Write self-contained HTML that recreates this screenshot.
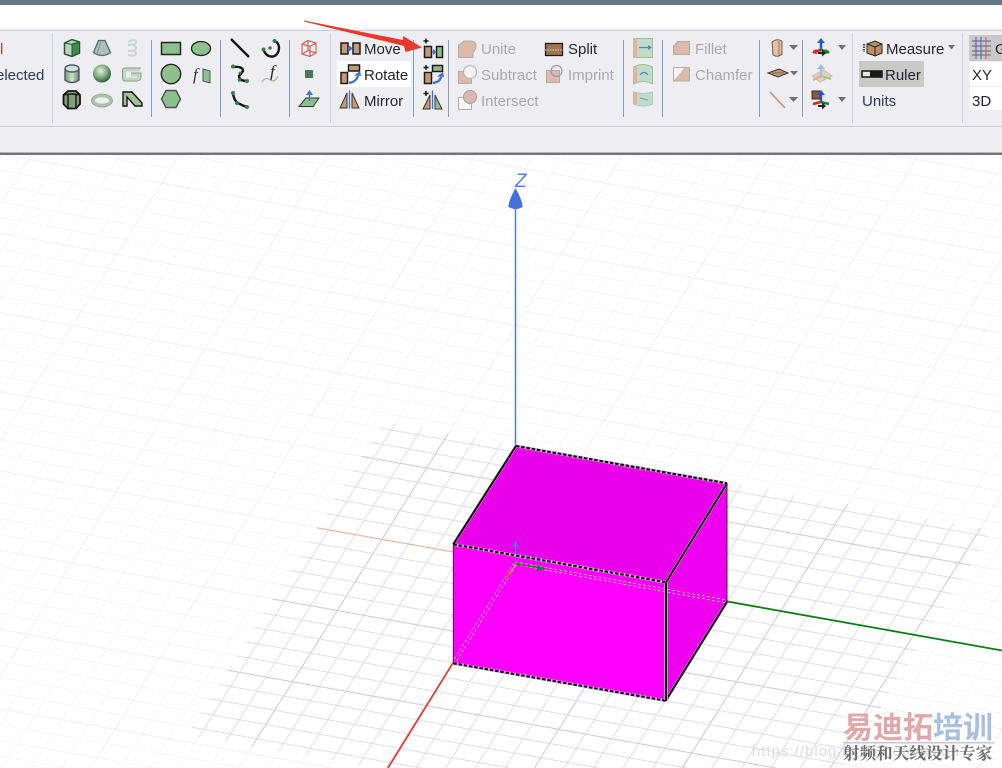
<!DOCTYPE html>
<html>
<head>
<meta charset="utf-8">
<style>
html,body{margin:0;padding:0;background:#fff;width:1002px;height:768px;overflow:hidden}
svg{position:absolute;left:0;top:0;display:block}
text{font-family:"Liberation Sans",sans-serif;font-size:15px}
.d{fill:#24242e}
.g{fill:#a9a9ad}
.s{stroke:#8d9ab5;stroke-width:1;fill:none}
.s2{stroke:#cfd2e2;stroke-width:1;fill:none}
.br{fill:#c39a78;stroke:#1d1a18;stroke-width:1.5}
.gr{fill:#8dbf8d;stroke:#1d1a18;stroke-width:1.5}
.pk{fill:#dfb8ac;stroke:#a9b0a4;stroke-width:1}
</style>
</head>
<body>
<svg width="1002" height="768" viewBox="0 0 1002 768" xmlns="http://www.w3.org/2000/svg">
<defs>
<path id="ga" d="M981 155L1002 158.800M892 155L1002 174.600M803.300 155L1002 190.500M714.600 155L1002 206.300M625.900 155L1002 222.200M537.100 155L1002 238M448.400 155L1002 253.900M359.700 155L1002 269.700M271 155L1002 285.500M182.300 155L1002 301.400M93.600 155L1002 317.200M4.800 155L1002 333.100M0 170L1002 348.900M0 185.800L1002 364.800M0 201.700L1002 380.600M0 217.500L1002 396.400M0 233.400L1002 412.300M0 249.200L1002 428.100M0 265L1002 444M0 280.900L1002 459.800M0 296.700L1002 475.700M0 312.600L1002 491.500M0 328.400L1002 507.300M0 344.300L1002 523.200M0 360.100L1002 539M0 376L1002 554.900M0 391.800L1002 570.700M0 407.700L1002 586.600M0 423.500L1002 602.400M0 439.300L1002 618.300M0 455.200L1002 634.100M0 471L1002 650M0 486.900L1002 665.800M0 502.700L1002 681.600M0 518.600L1002 697.500M0 534.400L1002 713.300M0 550.300L1002 729.200M0 566.100L1002 745M0 581.900L1002 760.900M0 597.800L953 768M0 613.600L864.300 768M0 629.500L775.500 768M0 645.300L686.800 768M0 661.200L598.100 768M0 677L509.400 768M0 692.900L420.700 768M0 708.700L332 768M0 724.600L243.300 768M0 740.400L154.500 768M0 756.200L65.800 768"/>
<path id="gb" d="M31.300 155L0 204.900M60.900 155L0 252.200M90.400 155L0 299.300M120 155L0 346.500M149.600 155L0 393.700M179.200 155L0 440.900M208.700 155L0 488.100M238.300 155L0 535.300M267.900 155L0 582.500M297.500 155L0 629.700M327 155L0 676.800M356.600 155L0 724M386.200 155L2 768M415.800 155L31.600 768M445.400 155L61.200 768M474.900 155L90.700 768M504.500 155L120.300 768M534.100 155L149.900 768M563.700 155L179.500 768M593.200 155L209 768M622.800 155L238.600 768M652.400 155L268.200 768M682 155L297.800 768M711.500 155L327.300 768M741.100 155L356.900 768M770.700 155L386.500 768M800.300 155L416.100 768M829.900 155L445.700 768M859.400 155L475.200 768M889 155L504.800 768M918.600 155L534.400 768M948.200 155L564 768M977.700 155L593.500 768M1002 163.500L623.100 768M1002 210.700L652.700 768M1002 257.900L682.300 768M1002 305.100L711.800 768M1002 352.300L741.400 768M1002 399.500L771 768M1002 446.700L800.600 768M1002 493.800L830.200 768M1002 541L859.700 768M1002 588.200L889.300 768M1002 635.400L918.900 768M1002 682.600L948.500 768M1002 729.800L978 768"/>
<path id="gm" d="M892 155L1002 174.600M448.400 155L1002 253.900M4.800 155L1002 333.100M0 233.400L1002 412.300M0 312.600L1002 491.500M0 391.800L1002 570.700M0 471L1002 650M0 550.300L1002 729.200M0 629.500L775.500 768M0 708.700L332 768M31.300 155L0 204.900M179.200 155L0 440.900M327 155L0 676.800M474.900 155L90.700 768M622.800 155L238.600 768M770.700 155L386.500 768M918.600 155L534.400 768M1002 257.900L682.300 768M1002 493.800L830.200 768M1002 729.800L978 768"/>
<clipPath id="inner"><polygon points="383.500,421.700 992.100,530.300 843.100,768 376,768 187.600,734.300"/></clipPath>
<radialGradient id="sph" cx="0.42" cy="0.36" r="0.65"><stop offset="0" stop-color="#e6f0e6"/><stop offset="0.55" stop-color="#80ad80"/><stop offset="1" stop-color="#2f5a3a"/></radialGradient>
<linearGradient id="cyl" x1="0" x2="1" y1="0" y2="0"><stop offset="0" stop-color="#6f9a6f"/><stop offset="0.5" stop-color="#d0e2d0"/><stop offset="1" stop-color="#5f8f5f"/></linearGradient>
</defs>

<!-- viewport grid -->
<g fill="none" stroke-width="1">
  <g stroke="#f6f6fb"><use href="#ga"/><use href="#gb"/></g>
  <use href="#gm" stroke="#f1f0f7"/>
  <g clip-path="url(#inner)">
    <g stroke="#e0deef"><use href="#ga"/><use href="#gb"/></g>
    <use href="#gm" stroke="#cfcde3"/>
  </g>
</g>

<!-- top chrome -->
<rect x="0" y="0" width="1002" height="5" fill="#66768c"/>
<rect x="0" y="5" width="1002" height="23" fill="#ffffff"/>
<rect x="0" y="28" width="1002" height="2" fill="#f5f5f5"/>
<rect x="0" y="30" width="1002" height="1" fill="#cdcde0"/>
<rect x="0" y="31" width="1002" height="95" fill="#eeeef2"/>
<rect x="0" y="126" width="1002" height="1" fill="#cdcde0"/>
<rect x="0" y="127" width="1002" height="25" fill="#f0f0f2"/>
<rect x="0" y="152" width="1002" height="1" fill="#b5b5b5"/>
<rect x="0" y="153" width="1002" height="2" fill="#757575"/>

<!-- separators -->
<g>
<path class="s2" d="M52.500 33V123M330.500 33V123M852.500 33V123M962.500 33V123"/>
<path class="s" d="M151.500 40V117M220.500 40V117M289.500 40V117M413.500 40V117M448.500 40V117M623.500 40V117M662.500 40V117M759.500 40V117M802.500 40V117"/>
</g>

<!-- highlights -->
<rect x="337" y="61" width="74" height="26" fill="#ffffff"/>
<rect x="859" y="61" width="65" height="26" fill="#c9c9c5"/>
<rect x="969" y="35" width="33" height="26" fill="#c9c9c9"/>
<rect x="970" y="62" width="32" height="24" fill="#ffffff"/>
<rect x="970" y="87" width="32" height="23" fill="#ffffff"/>

<!-- left clipped labels -->
<text x="0" y="54" style="fill:#a8442a">l</text>
<text x="-4" y="80" style="fill:#2b3a55">elected</text>

<!-- primitives -->
<g>
<polygon points="64.500,43 72,39.500 79.500,42 79.500,53 72,56.500 64.500,54" fill="#bcd4bd" stroke="#1f5a2c" stroke-width="1.500"/>
<polygon points="72,44 79.500,42 79.500,53 72,56.500" fill="#3f8a4f" stroke="#1f5a2c"/>
<path d="M64.500 43L72 44.500V56" stroke="#1f5a2c" fill="none"/>

<path d="M98.500 40.500H105L110.500 52.500Q102 58.500 93.500 52.500Z" fill="#a9c2b2" stroke="#56647e" stroke-width="1.300"/>
<path d="M101 41L97 54" stroke="#7d9aa0" fill="none"/>

<path d="M128 42Q136 38 136 42Q136 45 128 45Q136 44 136 48Q136 51 128 51Q136 50 136 53Q136 57 128 55" stroke="#c6dbce" stroke-width="2" fill="none"/>

<path d="M65 69V80Q72 85 79 80V69" fill="url(#cyl)" stroke="#4a5870" stroke-width="1.400"/>
<ellipse cx="72" cy="68.500" rx="7" ry="3.500" fill="#d4e4d4" stroke="#4a5870" stroke-width="1.400"/>

<circle cx="102" cy="73.500" r="9" fill="url(#sph)"/>

<path d="M141 68H125Q122.500 68 122.500 71V77Q122.500 81 125 81H136Q140 81 141 78V73H131" stroke="#8a9a8e" stroke-width="1" fill="none"/>
<path d="M140 70H126Q124.500 70 124.500 72V77Q124.500 79 126 79H135Q138 79 139 77V75H131" stroke="#bdd8bd" stroke-width="3" fill="none"/>

<polygon points="68,91 76,91 80,95 80,104 76,108.500 68,108.500 63.500,104 63.500,95" fill="#7f9f7f" stroke="#17140f" stroke-width="1.800"/>
<path d="M68 94V108M76 94V108M63.500 95Q72 93 80 95" stroke="#17140f" stroke-width="1.400" fill="none"/>

<ellipse cx="102" cy="100.500" rx="9" ry="5" fill="none" stroke="#a6c4a6" stroke-width="3.500"/>
<ellipse cx="102" cy="100.500" rx="10.500" ry="6.500" fill="none" stroke="#8a9a8e" stroke-width="0.600"/>

<path d="M123 92H132L142 103V106H135L127 97H127V106H123Z" fill="#9cc39c" stroke="#17140f" stroke-width="1.400"/>

<rect x="161.500" y="42.500" width="19" height="12" fill="#8dc08d" stroke="#20261f" stroke-width="1.500"/>
<ellipse cx="201" cy="48.500" rx="9.500" ry="7" fill="#8dc08d" stroke="#20261f" stroke-width="1.300"/>
<circle cx="171" cy="74" r="9.700" fill="#8dc08d" stroke="#20261f" stroke-width="1.400"/>
<polygon points="203,69 210,71 210,83 203,81" fill="#8dc08d" stroke="#4a5a4a"/>
<text x="193" y="80" style="font-family:'Liberation Serif',serif;font-style:italic;font-size:17px;fill:#333">f</text>
<polygon points="166,90.500 176,90.500 180.500,99 176,107.500 166,107.500 161.500,99" fill="#8dc08d" stroke="#4a4f55" stroke-width="1.400"/>

<path d="M231 39L249 57" stroke="#15151a" stroke-width="2.400" fill="none"/>
<path d="M263.500 49.500Q266 57 273 56.500Q279 55 279 47Q278.500 43 275 41" stroke="#15151a" stroke-width="2.400" fill="none"/>
<circle cx="263.500" cy="49.500" r="2" fill="#3a7d4a"/><circle cx="270" cy="48" r="1.700" fill="#3a7d4a"/><circle cx="274.500" cy="41" r="2" fill="#3a7d4a"/>

<path d="M233 67Q243 66 243 71Q241 74 239 76Q239 81 247 81" stroke="#15151a" stroke-width="2.400" fill="none"/>
<circle cx="233" cy="66.500" r="2" fill="#3a7d4a"/><circle cx="240" cy="73" r="1.500" fill="#3a7d4a"/><circle cx="239.500" cy="80" r="1.700" fill="#3a7d4a"/><circle cx="247" cy="81" r="2" fill="#3a7d4a"/>

<text x="270" y="77" style="font-family:'Liberation Serif',serif;font-style:italic;font-size:17px;fill:#222">f</text>
<path d="M262 82Q266 76 270 80Q275 83 278 76" stroke="#9cc09c" stroke-width="1.300" fill="none"/>

<path d="M233 93Q234 102 240 104Q243 106 248 107" stroke="#15151a" stroke-width="2.400" fill="none"/>
<circle cx="233" cy="93" r="2" fill="#3a7d4a"/><circle cx="237" cy="103" r="2" fill="#3a7d4a"/><circle cx="247" cy="107" r="2" fill="#3a7d4a"/>

<g fill="none" stroke="#d2625a" stroke-width="1.200">
<polygon points="302,44 308,40.500 316,43 316,53 310,56.500 302,54"/>
<path d="M302 44L310 46.500V56.500M310 46.500L316 43M308 40.500V50.500L302 54M308 50.500L316 53"/>
</g>
<rect x="305" y="70" width="8" height="8" fill="#4a7a55"/>
<polygon points="306,98 319,98 313,106.500 299,106.500" fill="#8dc08d" stroke="#2a3a2a"/>
<path d="M309.500 101V93" stroke="#3c72d8" stroke-width="1.500" fill="none"/>
<polygon points="309.500,90 306,95 313,95" fill="#3c72d8"/>
</g>

<!-- transform tools -->
<g>
<rect x="341" y="43" width="7" height="11" class="br"/>
<rect x="353" y="43" width="7" height="11" class="br"/>
<path d="M348 48.500H351" stroke="#3c72d8" stroke-width="1.500"/>
<polygon points="353,48.500 349,45.500 349,51.500" fill="#3c72d8"/>
<text x="364" y="54" class="d">Move</text>

<rect x="341" y="72.500" width="6.500" height="11" class="br"/>
<rect x="348.500" y="65" width="11" height="6" class="br"/>
<path d="M349 83Q356 82 358 76" stroke="#3c72d8" stroke-width="2.200" fill="none"/>
<polygon points="361,76 354,75.500 360,71" fill="#3c72d8"/>
<text x="364" y="80" class="d">Rotate</text>

<polygon points="347,93 347,108 340,108" fill="#c39a78" stroke="#3a3530"/>
<polygon points="352,93 352,108 359,108" fill="#c39a78" stroke="#3a3530"/>
<path d="M349.500 90.500V108.500" stroke="#3c72d8" stroke-width="1.300"/>
<text x="364" y="106" class="d">Mirror</text>

<path d="M426 38.500V43.500M423.500 41H428.500" stroke="#111" stroke-width="1.400"/>
<rect x="424.500" y="46.500" width="7" height="11" class="br"/>
<rect x="436.500" y="46.500" width="6" height="11" class="gr"/>
<path d="M432 52H435" stroke="#3c72d8" stroke-width="1.500"/>
<polygon points="436.500,52 433,49 433,55" fill="#3c72d8"/>

<path d="M426 65V70M423.500 67.500H428.500" stroke="#111" stroke-width="1.400"/>
<rect x="424.500" y="72.500" width="7" height="11" class="br"/>
<rect x="432.500" y="65.500" width="10" height="6" class="gr"/>
<path d="M433 83Q440 82 441 77" stroke="#3c72d8" stroke-width="2.200" fill="none"/>
<polygon points="444,77 437,76.500 443,72" fill="#3c72d8"/>

<path d="M426 91V96M423.500 93.500H428.500" stroke="#111" stroke-width="1.400"/>
<polygon points="430,95 430,109 423,109" fill="#c39a78" stroke="#3a3530"/>
<polygon points="435,95 435,109 442,109" fill="#8dc08d" stroke="#3a3530"/>
<path d="M432.500 90.500V109" stroke="#3c72d8" stroke-width="1.300"/>
</g>

<!-- boolean tools -->
<g>
<path d="M458.500 45.500L464 41H472Q476 42 476 46Q476 50 473 52V57.500H458.500Z" class="pk"/>
<text x="481" y="54" class="g">Unite</text>

<rect x="458.500" y="71.500" width="13" height="12" class="pk"/>
<circle cx="470" cy="72" r="6.500" fill="#f4f4f6" stroke="#b9b9bd" stroke-width="1.300"/>
<text x="481" y="80" class="g">Subtract</text>

<rect x="458.500" y="97.500" width="13" height="12" fill="#f6f6f6" stroke="#a9b0a4"/>
<circle cx="470" cy="97" r="6.500" fill="#dfb8ac" stroke="#a9a9b5" stroke-width="1.200"/>
<text x="481" y="106" class="g">Intersect</text>

<rect x="545.500" y="43.500" width="17" height="12" fill="#a0744f" stroke="#1d1a18" stroke-width="1.300"/>
<path d="M545 50H565" stroke="#d9d4c8" stroke-width="1" stroke-dasharray="1.500 1"/>
<text x="568" y="54" class="d">Split</text>

<rect x="546.500" y="70.500" width="13" height="12" class="pk"/>
<circle cx="556.500" cy="71" r="5.500" fill="none" stroke="#a096a8" stroke-width="1.200"/>
<text x="568" y="80" class="g">Imprint</text>

<rect x="633.500" y="38.500" width="19" height="19" fill="#c3dcc6" stroke="#9cc09c"/>
<rect x="633" y="38" width="4" height="20" fill="#e0b59c"/>
<path d="M639 47.500H650" stroke="#5585d8" stroke-width="1.300"/>
<polygon points="652,47.500 648,45 648,50" fill="#5585d8"/>

<path d="M633.500 67Q643 62 652.500 67V84Q643 79 633.500 84Z" fill="#c3dcc6" stroke="#9cc09c"/>
<path d="M633 67H637V83H633Z" fill="#e0b59c"/>
<path d="M640 75Q644 70 648 75" stroke="#5585d8" stroke-width="1.200" fill="none"/>

<path d="M633.500 92Q643 95 652.500 92V104Q643 108 633.500 104Z" fill="#c3dcc6" stroke="#a8c8d8"/>
<path d="M633 92H637V104H633Z" fill="#e0b59c"/>
<path d="M640 98L648 100" stroke="#80a0d8" stroke-width="1.200" fill="none"/>

<path d="M673.500 46L678 41.500H689.500V54.500H673.500Z" class="pk"/>
<text x="695" y="54" class="g">Fillet</text>
<polygon points="673.500,81 685,67.500 689.500,67.500 689.500,81" fill="#dfb8ac" stroke="#a9b0a4"/>
<path d="M673.500 81V67.500H685" fill="#f5f5f5" stroke="#a9b0a4"/>
<text x="695" y="80" class="g">Chamfer</text>
</g>

<!-- sheet / plane tools -->
<g>
<path d="M772 42Q777 38 782 41L782 54Q778 58 773 55Z" fill="#e2c0a8" stroke="#6a5a4e"/>
<path d="M779 40V55" stroke="#c39a78" stroke-width="2"/>
<polygon points="789,45 798,45 793.500,50" fill="#6f6f74"/>

<polygon points="768,73 779,69 788,73 778,77" fill="#c39a78" stroke="#3a3530"/>
<path d="M772 73H784" stroke="#8a6a4e"/>
<polygon points="790,71 798,71 794,75.500" fill="#6f6f74"/>

<path d="M770 92L785 108" stroke="#d0a084" stroke-width="2"/>
<polygon points="789,97 798,97 793.500,102" fill="#6f6f74"/>

<path d="M821 42V50" stroke="#2058c8" stroke-width="2.500"/>
<polygon points="821,38 817,43 825,43" fill="#2058c8"/>
<path d="M821 50L813 52" stroke="#d82020" stroke-width="2.500"/>
<path d="M821 50L829 52" stroke="#188028" stroke-width="2.500"/>
<polygon points="812,53 816,49 817,54" fill="#d82020"/>
<polygon points="830,53 826,49 825,54" fill="#188028"/>
<path d="M818 53H823" stroke="#222" stroke-width="2"/>
<polygon points="826,53 822,49.500 822,56.500" fill="#222"/>
<polygon points="838,45 846,45 842,50" fill="#6f6f74"/>

<polygon points="812,76 824,70 832,76 820,82" fill="#e8d0b0" stroke="#cfc0a8"/>
<path d="M821 67V76" stroke="#a0bde8" stroke-width="2.500"/>
<polygon points="821,64 817,69 825,69" fill="#a0bde8"/>
<path d="M821 76L813 80" stroke="#e8a0a0" stroke-width="2"/>
<path d="M821 76L831 79" stroke="#9cc89c" stroke-width="2"/>

<rect x="812" y="91" width="8" height="8" fill="#8a5a3a" stroke="#3a2a1a"/>
<path d="M821 94V102" stroke="#2058c8" stroke-width="2.500"/>
<polygon points="821,90 817,95 825,95" fill="#2058c8"/>
<path d="M821 102L813 104" stroke="#d82020" stroke-width="2.500"/>
<path d="M821 102L829 104" stroke="#188028" stroke-width="2.500"/>
<path d="M818 106H823" stroke="#222" stroke-width="2"/>
<polygon points="826,106 822,102.500 822,109.500" fill="#222"/>
<polygon points="838,97 846,97 842,102" fill="#6f6f74"/>
</g>

<!-- measure -->
<g>
<path d="M864 44V52" stroke="#444" stroke-width="2" stroke-dasharray="1.500 1"/>
<polygon points="867,44 875,41 882,44 882,53 875,56 867,53" fill="#b98f68" stroke="#2a2420"/>
<path d="M867 44L875 47V56M875 47L882 44" stroke="#2a2420" fill="none"/>
<text x="886" y="54" class="d">Measure</text>
<polygon points="948,45 955,45 951.500,49.500" fill="#6f6f74"/>

<rect x="862" y="71" width="20" height="6" fill="#dfe8df" stroke="#17140f" stroke-width="1.500"/>
<rect x="870" y="71" width="12" height="6" fill="#1a1a1a"/>
<text x="885" y="80" class="d">Ruler</text>
<text x="862" y="106" style="fill:#2b3a55">Units</text>

<path d="M972 41H991M972 46H991M972 51H991" stroke="#5a5a8a" stroke-width="1" fill="none"/>
<path d="M972 55H991" stroke="#3a8a4a" stroke-width="1"/>
<path d="M976 37V59M981 37V59" stroke="#5a5a9a" stroke-width="1" fill="none"/>
<path d="M986 37V59" stroke="#c85a5a" stroke-width="1" fill="none"/>
<text x="995" y="54" class="d">G</text>
<text x="972" y="80" class="d">XY</text>
<text x="972" y="106" class="d">3D</text>
</g>

<!-- red annotation arrow -->
<polygon points="304,20.500 403,40 403.300,36 422,47.500 405.500,52 404,46 304,21.500" fill="#e8392f"/>

<!-- axes behind box -->
<path d="M317 528L453 552" stroke="#e9bb9c" stroke-width="1" fill="none"/>
<path d="M727 601.500L1002 650.500" stroke="#0c7c14" stroke-width="1.700" fill="none"/>
<path d="M453 663L388 768" stroke="#f03222" stroke-width="1.600" fill="none"/>
<path d="M515.500 446V205" stroke="#4f7ddf" stroke-width="1.500" fill="none"/>
<path d="M515.500 188Q508 202 508.500 207Q515.500 211 522.500 207Q523 202 515.500 188Z" fill="#3f72dc"/>
<text x="515" y="187" style="font-style:italic;font-size:19px;fill:#5582dc">Z</text>

<!-- box -->
<polygon points="516,446 727,483.300 666,582.300 453.300,544.300" fill="#ea00ea"/>
<polygon points="453.300,544.300 666,582.300 665.700,700.700 453.300,663.300" fill="#fd00fd"/>
<polygon points="666,582.300 727,483.300 727,601.700 665.700,700.700" fill="#ee00ee"/>

<!-- hidden lines -->
<g fill="none" stroke="#c8c8b8" stroke-width="0.800" stroke-dasharray="3 2">
<path d="M515 562L727 600M515 564.500L727 603"/>
<path d="M514 563L452.500 662M516 565L455.500 663"/>
</g>

<!-- small triad -->
<path d="M515.500 563V546" stroke="#4a78dc" stroke-width="1"/>
<polygon points="515.500,540 512.500,546.500 518.500,546.500" fill="#4a78dc"/>
<path d="M515.500 564L541 568" stroke="#108018" stroke-width="1.200"/>
<polygon points="546,568.500 537,565.500 537,571" fill="#108018"/>
<path d="M515.500 564L509 575" stroke="#e89070" stroke-width="1"/>
<polygon points="506,578 508,572 512,575" fill="#e84a20"/>

<!-- box edges -->
<g fill="none">
<g stroke="#e0a8e0" stroke-width="3">
<path d="M516 446L727 483.300M453.300 544.300L666 582.300M453.300 663.300L665.700 700.700"/>
<path d="M516 446L453.300 544.300M727 483.300L666 582.300M727 601.700L665.700 700.700"/>
</g>
<g stroke="#0d0d0d" stroke-width="2.100" stroke-dasharray="3.500 1.800">
<path d="M516 446L727 483.300M453.300 544.300L666 582.300M453.300 663.300L665.700 700.700"/>
</g>
<g stroke="#0d0d0d" stroke-width="2">
<path d="M516 446L453.300 544.300M727 483.300L666 582.300M727 601.700L665.700 700.700"/>
</g>
<path d="M453.300 544.300V663.300" stroke="#5a0f5a" stroke-width="1"/>
<path d="M727 483.300V601.700" stroke="#5a0f5a" stroke-width="1"/>
<path d="M666 583V700" stroke="#d8c8d8" stroke-width="4"/>
<path d="M666 583V700" stroke="#0d0d0d" stroke-width="2.400"/>
</g>

<!-- watermark -->
<text x="752" y="756" style="font-size:15px;fill:#dcdcdc;letter-spacing:1px">https://blog.csdn.net/weixin</text>
<rect x="843" y="742" width="151" height="1.500" fill="#c9c4dc"/>
<text x="843" y="738" style="font-family:'Liberation Sans','Noto Sans CJK SC',sans-serif;font-weight:700;font-size:30px;fill:#e0a9a9">易迪拓</text>
<text x="933" y="738" style="font-family:'Liberation Sans','Noto Sans CJK SC',sans-serif;font-weight:700;font-size:30px;fill:#a8c0dc">培训</text>
<text x="843" y="759" style="font-family:'Liberation Serif','Noto Serif CJK SC',serif;font-weight:700;font-size:16.600px;fill:#6a6a6a">射频和天线设计专家</text>
</svg>
</body>
</html>
